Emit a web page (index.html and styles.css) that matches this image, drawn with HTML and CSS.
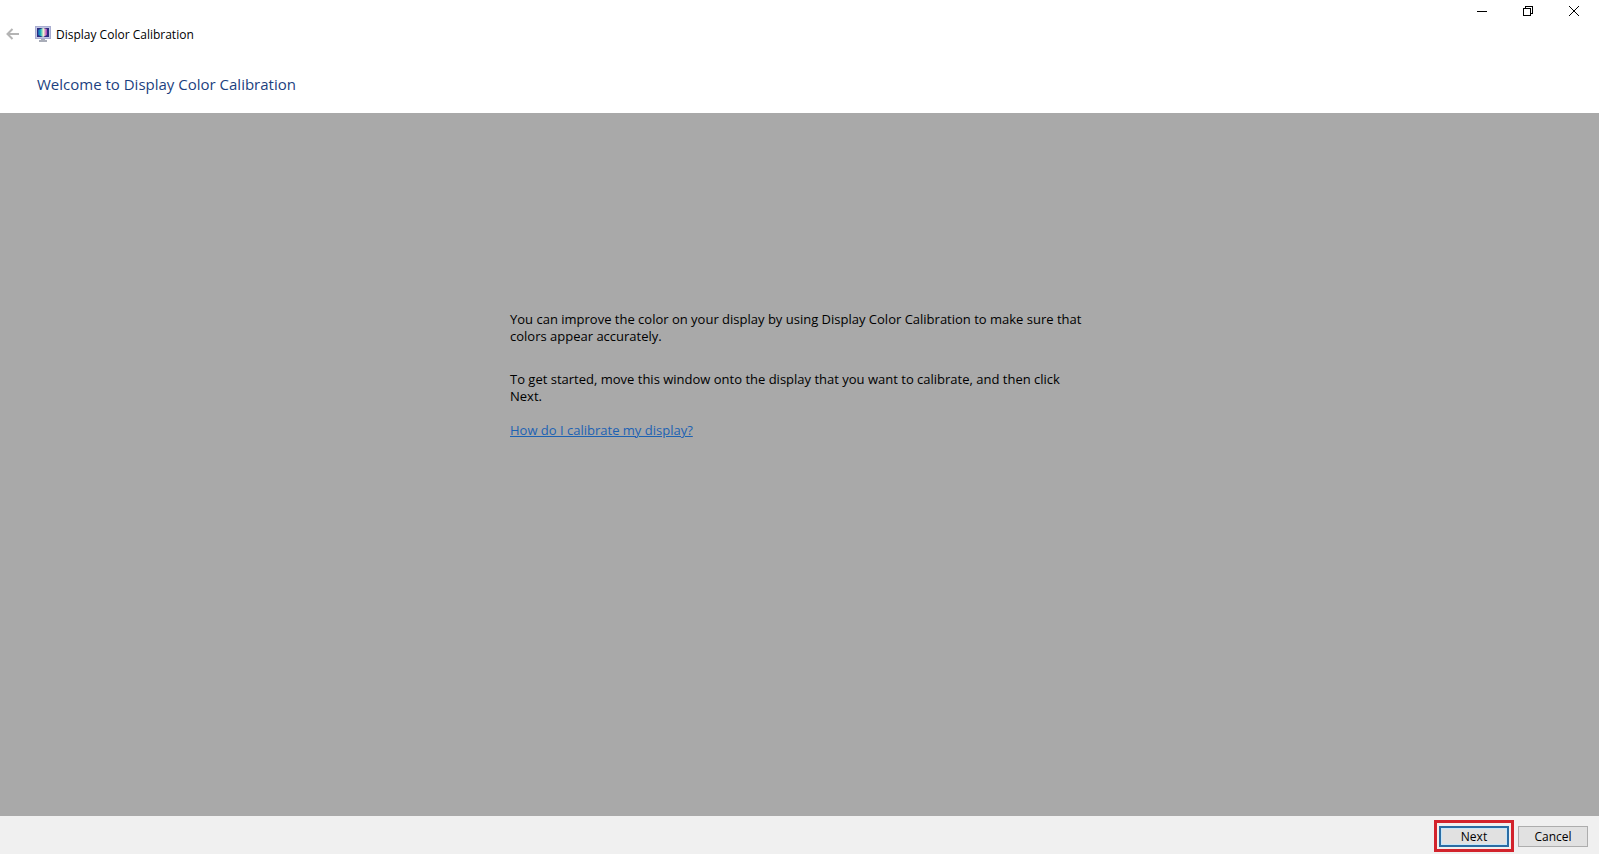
FILE: index.html
```html
<!DOCTYPE html>
<html lang="en">

<head>
    <meta charset="UTF-8" />
    <meta name="viewport" content="width=device-width, initial-scale=1.0" />
    <title>Display Color Calibration</title>
    <link rel="stylesheet" href="styles.css">
</head>

<body>

    <header class="header">
        <!-- Window controls -->
        <div class="window-controls">
            <button type="button" class="control" aria-label="Minimize">
                <svg width="12" height="12" viewBox="0 0 12 12" shape-rendering="crispEdges">
                    <path d="M1 6.5h10" />
                </svg>
            </button>
            <button type="button" class="control" aria-label="Restore">
                <svg width="12" height="12" viewBox="0 0 12 12" shape-rendering="crispEdges">
                    <path d="M1.5 3.5h7v7h-7zM3.5 3V1.5h7v7H9" />
                </svg>
            </button>
            <button type="button" class="control" aria-label="Close">
                <svg width="12" height="12" viewBox="0 0 12 12">
                    <path d="M1 1l10 10M11 1L1 11" />
                </svg>
            </button>
        </div>

        <!-- Back button, icon and title -->
        <div class="title-bar">
            <button type="button" class="back" aria-label="Back" disabled>
                <svg width="14" height="12" viewBox="0 0 14 12">
                    <path d="M13 6H2M6.5 1L1.5 6l5 5" />
                </svg>
            </button>
            <svg class="app-icon" width="16" height="16" viewBox="0 0 16 16">
                <defs>
                    <linearGradient id="spectrum" x1="0" y1="0" x2="1" y2="0">
                        <stop offset="0" stop-color="#1c58b8" />
                        <stop offset="0.3" stop-color="#20b8b8" />
                        <stop offset="0.6" stop-color="#f4f4d0" />
                        <stop offset="1" stop-color="#a838b8" />
                    </linearGradient>
                </defs>
                <rect x="0.5" y="0.5" width="15" height="12" fill="#c3c6e4" stroke="#a9add0" />
                <rect x="2" y="2" width="12" height="9" fill="#2c2c80" />
                <path d="M3 4l5-2 4 1v6l-4 2-5-2z" fill="url(#spectrum)" />
                <path d="M6 13h4v1h2v2H4v-2h2z" fill="#a9adb8" />
            </svg>
            <span class="title">Display Color Calibration</span>
        </div>

        <h1>Welcome to Display Color Calibration</h1>
    </header>

    <main class="content">
        <div class="text">
            <p>You can improve the color on your display by using Display Color Calibration to make sure that colors appear accurately.</p>
            <p>To get started, move this window onto the display that you want to calibrate, and then click Next.</p>
            <a href="#">How do I calibrate my display?</a>
        </div>
    </main>

    <footer class="footer">
        <div class="highlight">
            <button type="button" class="btn default">Next</button>
        </div>
        <button type="button" class="btn">Cancel</button>
    </footer>

</body>

</html>
```
FILE: styles.css
```css
* {
    box-sizing: border-box;
}

body {
    font-family: "Open Sans", "Noto Sans", sans-serif;
    font-size: 12px;
    color: #000;
    background: #a9a9a9;
    display: flex;
    flex-direction: column;
    min-height: 100vh;
    margin: 0;
}

button {
    font-family: inherit;
    font-size: 12px;
    padding: 0;
}

.header {
    background: #fff;
    padding-bottom: 16px;
}

/* Window controls */
.window-controls {
    display: flex;
    justify-content: flex-end;
    padding-right: 2px;
}

.control {
    display: flex;
    justify-content: center;
    align-items: center;
    width: 46px;
    height: 22px;
    border: none;
    background: none;
}

.control svg {
    fill: none;
    stroke: #000;
}

.control:hover {
    background: #e5e5e5;
}

/* Title bar */
.title-bar {
    display: flex;
    align-items: center;
    height: 24px;
}

.back {
    width: 14px;
    height: 12px;
    margin: 0 15px 0 6px;
    border: none;
    background: none;
}

.back svg {
    display: block;
    fill: none;
    stroke: #b4b4b4;
    stroke-width: 2;
}

.title {
    margin-left: 5px;
}

h1 {
    margin: 26px 37px 0;
    font-size: 15px;
    font-weight: normal;
    line-height: 25px;
    color: #1c3f80;
}

/* Page text */
.content {
    flex: 1;
    padding: 198px 20px 20px;
}

.text {
    max-width: 579px;
    margin: 0 auto;
    font-size: 13px;
    line-height: 17px;
}

.text p {
    margin: 0 0 26px;
}

.text p + p {
    margin-bottom: 17px;
}

.text a {
    color: #1d62b3;
}

/* Bottom buttons */
.footer {
    display: flex;
    justify-content: flex-end;
    align-items: center;
    gap: 4px;
    height: 38px;
    padding: 2px 11px 0 0;
    background: #f0f0f0;
}

.highlight {
    padding: 3px 2px 2px;
    border: 3px solid #d2232c;
}

.btn {
    display: block;
    width: 70px;
    height: 21px;
    border: 1px solid #adadad;
    background: #e1e1e1;
    color: #000;
}

.default {
    border: 2px solid #2a6ca3;
    box-shadow: inset 0 0 0 1px #c5e6fb;
}
```
